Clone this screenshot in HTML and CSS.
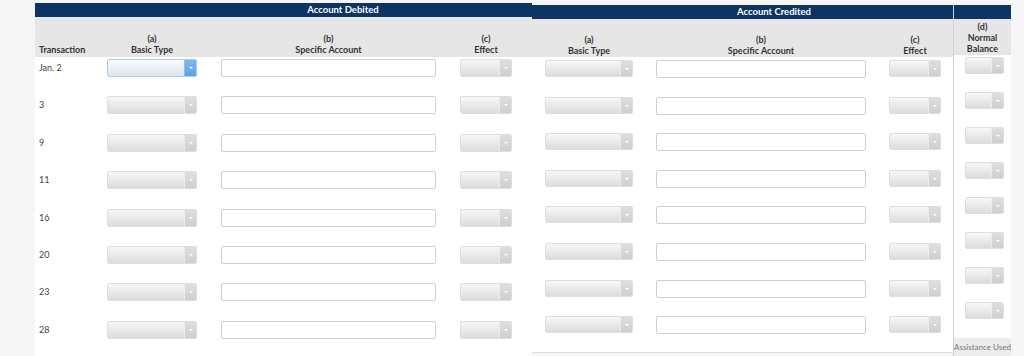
FILE: index.html
```html
<!DOCTYPE html>
<html lang="en">
<head>
  <meta charset="UTF-8" />
  <meta name="viewport" content="width=device-width, initial-scale=1.0" />
  <title>Journal Analysis</title>
  <link rel="stylesheet" href="styles.css">
</head>
<body>
  <div class="desk">

    <!-- Account Debited -->
    <div class="panel debit">
      <div class="bar">Account Debited</div>
      <div class="grid head">
        <div class="th left">Transaction</div>
        <div class="th">(a)<br>Basic Type</div>
        <div class="th">(b)<br>Specific Account</div>
        <div class="th">(c)<br>Effect</div>
      </div>
      <div class="rows">
        <div class="grid row"><span class="date">Jan. 2</span><span class="select active"><i></i></span><span class="field"></span><span class="select"><i></i></span></div>
        <div class="grid row"><span class="date">3</span><span class="select"><i></i></span><span class="field"></span><span class="select"><i></i></span></div>
        <div class="grid row"><span class="date">9</span><span class="select"><i></i></span><span class="field"></span><span class="select"><i></i></span></div>
        <div class="grid row"><span class="date">11</span><span class="select"><i></i></span><span class="field"></span><span class="select"><i></i></span></div>
        <div class="grid row"><span class="date">16</span><span class="select"><i></i></span><span class="field"></span><span class="select"><i></i></span></div>
        <div class="grid row"><span class="date">20</span><span class="select"><i></i></span><span class="field"></span><span class="select"><i></i></span></div>
        <div class="grid row"><span class="date">23</span><span class="select"><i></i></span><span class="field"></span><span class="select"><i></i></span></div>
        <div class="grid row"><span class="date">28</span><span class="select"><i></i></span><span class="field"></span><span class="select"><i></i></span></div>
      </div>
    </div>

    <!-- Account Credited -->
    <div class="panel credit">
      <div class="bar">Account Credited</div>
      <div class="grid head">
        <div class="th">(a)<br>Basic Type</div>
        <div class="th">(b)<br>Specific Account</div>
        <div class="th">(c)<br>Effect</div>
      </div>
      <div class="rows">
        <div class="grid row"><span class="select"><i></i></span><span class="field"></span><span class="select"><i></i></span></div>
        <div class="grid row"><span class="select"><i></i></span><span class="field"></span><span class="select"><i></i></span></div>
        <div class="grid row"><span class="select"><i></i></span><span class="field"></span><span class="select"><i></i></span></div>
        <div class="grid row"><span class="select"><i></i></span><span class="field"></span><span class="select"><i></i></span></div>
        <div class="grid row"><span class="select"><i></i></span><span class="field"></span><span class="select"><i></i></span></div>
        <div class="grid row"><span class="select"><i></i></span><span class="field"></span><span class="select"><i></i></span></div>
        <div class="grid row"><span class="select"><i></i></span><span class="field"></span><span class="select"><i></i></span></div>
        <div class="grid row"><span class="select"><i></i></span><span class="field"></span><span class="select"><i></i></span></div>
      </div>
    </div>

    <!-- Normal Balance -->
    <div class="panel balance">
      <div class="bar"></div>
      <div class="head">
        <div class="th">(d)<br>Normal<br>Balance</div>
      </div>
      <div class="rows">
        <div class="row"><span class="select"><i></i></span></div>
        <div class="row"><span class="select"><i></i></span></div>
        <div class="row"><span class="select"><i></i></span></div>
        <div class="row"><span class="select"><i></i></span></div>
        <div class="row"><span class="select"><i></i></span></div>
        <div class="row"><span class="select"><i></i></span></div>
        <div class="row"><span class="select"><i></i></span></div>
        <div class="row"><span class="select"><i></i></span></div>
      </div>
      <div class="assist">Assistance Used</div>
    </div>

  </div>
</body>
</html>
```

FILE: styles.css
```css
body {
  margin: 0;
  background-color: #f6f6f6;
  font-family: 'Lato', 'Open Sans', sans-serif;
  color: #333;
  overflow: hidden;
}

.desk {
  display: flex;
  align-items: flex-start;
  padding-left: 35px;
  height: 356px;
}

.panel {
  background-color: #fff;
}

.bar {
  background-color: #0c3464;
  color: #fff;
  font-size: 9.5px;
  font-weight: bold;
  height: 14px;
  line-height: 14px;
  text-align: center;
}

.grid {
  display: grid;
}

.head {
  background-color: #e6e6e6;
  align-items: end;
}

.th {
  font-size: 9px;
  font-weight: bold;
  line-height: 11px;
  text-align: center;
  color: #333;
}

.th.left {
  text-align: left;
  padding-left: 4px;
}

.row {
  align-items: start;
}

.date {
  font-size: 9px;
  color: #444;
  padding-left: 4px;
  line-height: 18px;
}

/* dropdown */
.select {
  display: block;
  position: relative;
  height: 18px;
  box-sizing: border-box;
  border: 1px solid #dedede;
  border-radius: 2px;
  background: linear-gradient(#f7f7f7, #dcdcdc);
}

.select i {
  position: absolute;
  top: 0;
  right: 0;
  bottom: 0;
  width: 11px;
  border-left: 1px solid #ececec;
  background: linear-gradient(#dedede, #cfcfcf);
}

.select i::after {
  content: "";
  position: absolute;
  left: 4px;
  top: 7px;
  border-left: 2px solid transparent;
  border-right: 2px solid transparent;
  border-top: 2px solid #fff;
}

.select.active {
  border-color: #a9cbec;
  background: linear-gradient(#fafcff, #dde4ec);
}

.select.active i {
  border-left-color: #8cc0ee;
  background: linear-gradient(#7ab8ee, #5aa4e6);
}

/* text input */
.field {
  display: block;
  height: 18px;
  box-sizing: border-box;
  border: 1px solid #cfcfcf;
  border-radius: 2px;
  background-color: #fff;
}

/* left panel */
.debit {
  width: 497px;
  margin-top: 3px;
  height: 353px;
}

.debit .bar {
  padding-left: 119px;
}

.debit .grid {
  grid-template-columns: 48px 90px 215px 52px;
  column-gap: 24px;
}

.debit .head {
  height: 40px;
  padding-bottom: 2px;
  box-sizing: border-box;
}

.debit .rows {
  padding-top: 2px;
}

.debit .row {
  height: 37.4px;
}

/* right panel */
.credit {
  width: 421px;
  margin-top: 5px;
  height: 348px;
  border-bottom: 1px solid #dcdcdc;
  box-sizing: border-box;
}

.credit .bar {
  padding-left: 63px;
}

.credit .grid {
  grid-template-columns: 88px 210px 52px;
  column-gap: 23px;
  padding-left: 13px;
}

.credit .head {
  height: 38px;
  padding-bottom: 1px;
  box-sizing: border-box;
}

.credit .rows {
  padding-top: 3px;
}

.credit .row {
  height: 36.6px;
}

.credit .select {
  height: 17px;
}

/* normal balance column */
.balance {
  width: 58px;
  margin-top: 5px;
  border-left: 1px solid #c9d2de;
  box-sizing: border-box;
}

.balance .head {
  display: flex;
  justify-content: center;
  height: 36px;
  padding-bottom: 1px;
  box-sizing: border-box;
}

.balance .rows {
  padding-top: 2px;
}

.balance .row {
  height: 35px;
  padding-left: 11px;
}

.balance .select {
  width: 39px;
  height: 17px;
}

.assist {
  margin-top: 1px;
  height: 18px;
  padding-top: 3px;
  background-color: #ececec;
  font-size: 8px;
  line-height: 12px;
  text-align: right;
  color: #777;
  white-space: nowrap;
  overflow: hidden;
  padding-right: 4px;
}
```
